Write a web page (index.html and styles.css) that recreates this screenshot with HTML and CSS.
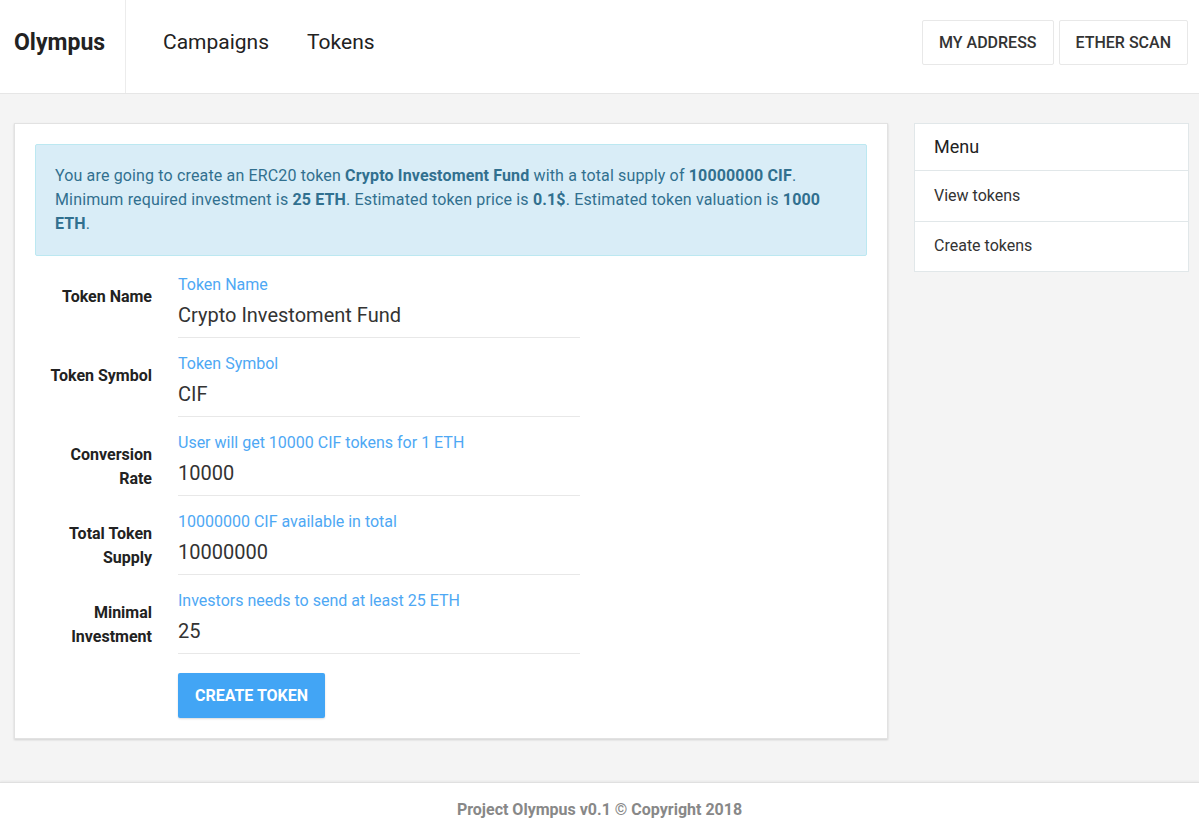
FILE: index.html
```html
<!DOCTYPE html>
<html>
<head>
<meta charset="utf-8">
<link rel="stylesheet" href="styles.css">
</head>
<body>
<header class="topbar">
  <div class="brand">Olympus</div>
  <nav class="nav">
    <a class="nav-link">Campaigns</a>
    <a class="nav-link">Tokens</a>
  </nav>
  <div class="actions">
    <button class="btn-outline">MY ADDRESS</button>
    <button class="btn-outline">ETHER SCAN</button>
  </div>
</header>

<div class="page">
  <main class="card">
    <div class="alert">
      You are going to create an ERC20 token <b>Crypto Investoment Fund</b> with a total supply of <b>10000000 CIF</b>. Minimum required investment is <b>25 ETH</b>. Estimated token price is <b>0.1$</b>. Estimated token valuation is <b>1000 ETH</b>.
    </div>

    <div class="form-row">
      <div class="label">Token Name</div>
      <div class="field"><div class="hint">Token Name</div><div class="value">Crypto Investoment Fund</div></div>
    </div>
    <div class="form-row">
      <div class="label">Token Symbol</div>
      <div class="field"><div class="hint">Token Symbol</div><div class="value">CIF</div></div>
    </div>
    <div class="form-row">
      <div class="label">Conversion Rate</div>
      <div class="field"><div class="hint">User will get 10000 CIF tokens for 1 ETH</div><div class="value">10000</div></div>
    </div>
    <div class="form-row">
      <div class="label">Total Token Supply</div>
      <div class="field"><div class="hint">10000000 CIF available in total</div><div class="value">10000000</div></div>
    </div>
    <div class="form-row">
      <div class="label">Minimal Investment</div>
      <div class="field"><div class="hint">Investors needs to send at least 25 ETH</div><div class="value">25</div></div>
    </div>
    <div class="form-actions">
      <button class="btn-primary">CREATE TOKEN</button>
    </div>
  </main>

  <aside class="menu">
    <div class="menu-head">Menu</div>
    <div class="menu-item">View tokens</div>
    <div class="menu-item">Create tokens</div>
  </aside>
</div>

<footer class="footer">Project Olympus v0.1 © Copyright 2018</footer>
</body>
</html>
```
FILE: styles.css
```css
* { box-sizing: border-box; }
html, body { margin: 0; padding: 0; }
body {
  font-family: Roboto, "Liberation Sans", sans-serif;
  background: #f4f4f4;
  color: #333;
}
.topbar {
  height: 94px;
  background: #fff;
  border-bottom: 1px solid #e6e6e6;
  display: flex;
  align-items: stretch;
}
.brand {
  width: 126px;
  border-right: 1px solid #ececec;
  padding-left: 14px;
  padding-bottom: 9px;
  display: flex;
  align-items: center;
  font-size: 23px;
  font-weight: 700;
  color: #222;
}
.nav {
  display: flex;
  align-items: center;
  padding-left: 18px;
  padding-bottom: 9px;
  flex: 1;
}
.nav-link {
  font-size: 21px;
  color: #222;
  padding: 0 19px;
}
.actions {
  display: flex;
  align-items: center;
  gap: 5px;
  padding-right: 11px;
  padding-bottom: 8px;
}
.btn-outline {
  height: 45px;
  padding: 0 16px;
  background: #fff;
  border: 1px solid #e8e8e8;
  border-radius: 2px;
  font-family: Roboto, "Liberation Sans", sans-serif;
  font-size: 16px;
  font-weight: 500;
  color: #333;
}
.page {
  display: flex;
  align-items: flex-start;
  gap: 26px;
  padding: 29px 10px 0 14px;
}
.card {
  width: 874px;
  flex: none;
  background: #fff;
  border: 1px solid #e2e2e2;
  box-shadow: 0 1px 2px rgba(0,0,0,0.15);
  padding: 20px 20px 20px;
}
.alert {
  background: #d9edf7;
  border: 1px solid #bce8f1;
  border-radius: 2px;
  color: #31708f;
  font-size: 16px;
  letter-spacing: 0.15px;
  line-height: 24px;
  padding: 19px 19px 19px;
  margin-bottom: 19px;
}
.alert b { font-weight: 700; }
.form-row {
  display: flex;
  gap: 26px;
  margin-bottom: 16px;
}
.label {
  width: 117px;
  flex: none;
  text-align: right;
  font-size: 16px;
  font-weight: 700;
  line-height: 24px;
  color: #222;
  padding-top: 10px;
}
.field {
  width: 402px;
  border-bottom: 1px solid #e8e8e8;
  padding-bottom: 8px;
}
.hint {
  font-size: 16px;
  line-height: 20px;
  color: #4ea8f4;
}
.value {
  font-size: 20px;
  line-height: 28px;
  color: #333;
  margin-top: 6px;
}
.form-actions {
  padding-left: 143px;
  padding-top: 3px;
}
.btn-primary {
  height: 45px;
  width: 147px;
  background: #42a5f5;
  color: #fff;
  border: none;
  border-radius: 2px;
  box-shadow: 0 1px 2px rgba(0,0,0,0.15);
  font-family: Roboto, "Liberation Sans", sans-serif;
  font-size: 16px;
  font-weight: 700;
}
.menu {
  width: 275px;
  flex: none;
  background: #fff;
  border: 1px solid #e1e7e9;
}
.menu-head {
  height: 47px;
  display: flex;
  align-items: center;
  padding-left: 19px;
  padding-bottom: 2px;
  font-size: 18px;
  color: #222;
  border-bottom: 1px solid #e1e7e9;
}
.menu-item {
  height: 50px;
  display: flex;
  align-items: center;
  padding-left: 19px;
  padding-bottom: 2px;
  font-size: 16px;
  color: #333;
}
.menu-item + .menu-item { border-top: 1px solid #e1e7e9; }
.footer {
  margin-top: 43px;
  background: #fff;
  border-top: 1px solid #e0e0e0;
  box-shadow: 0 -1px 2px rgba(0,0,0,0.05);
  text-align: center;
  font-size: 16px;
  font-weight: 700;
  color: #888;
  padding: 17px 0 30px;
  line-height: 20px;
}
```
